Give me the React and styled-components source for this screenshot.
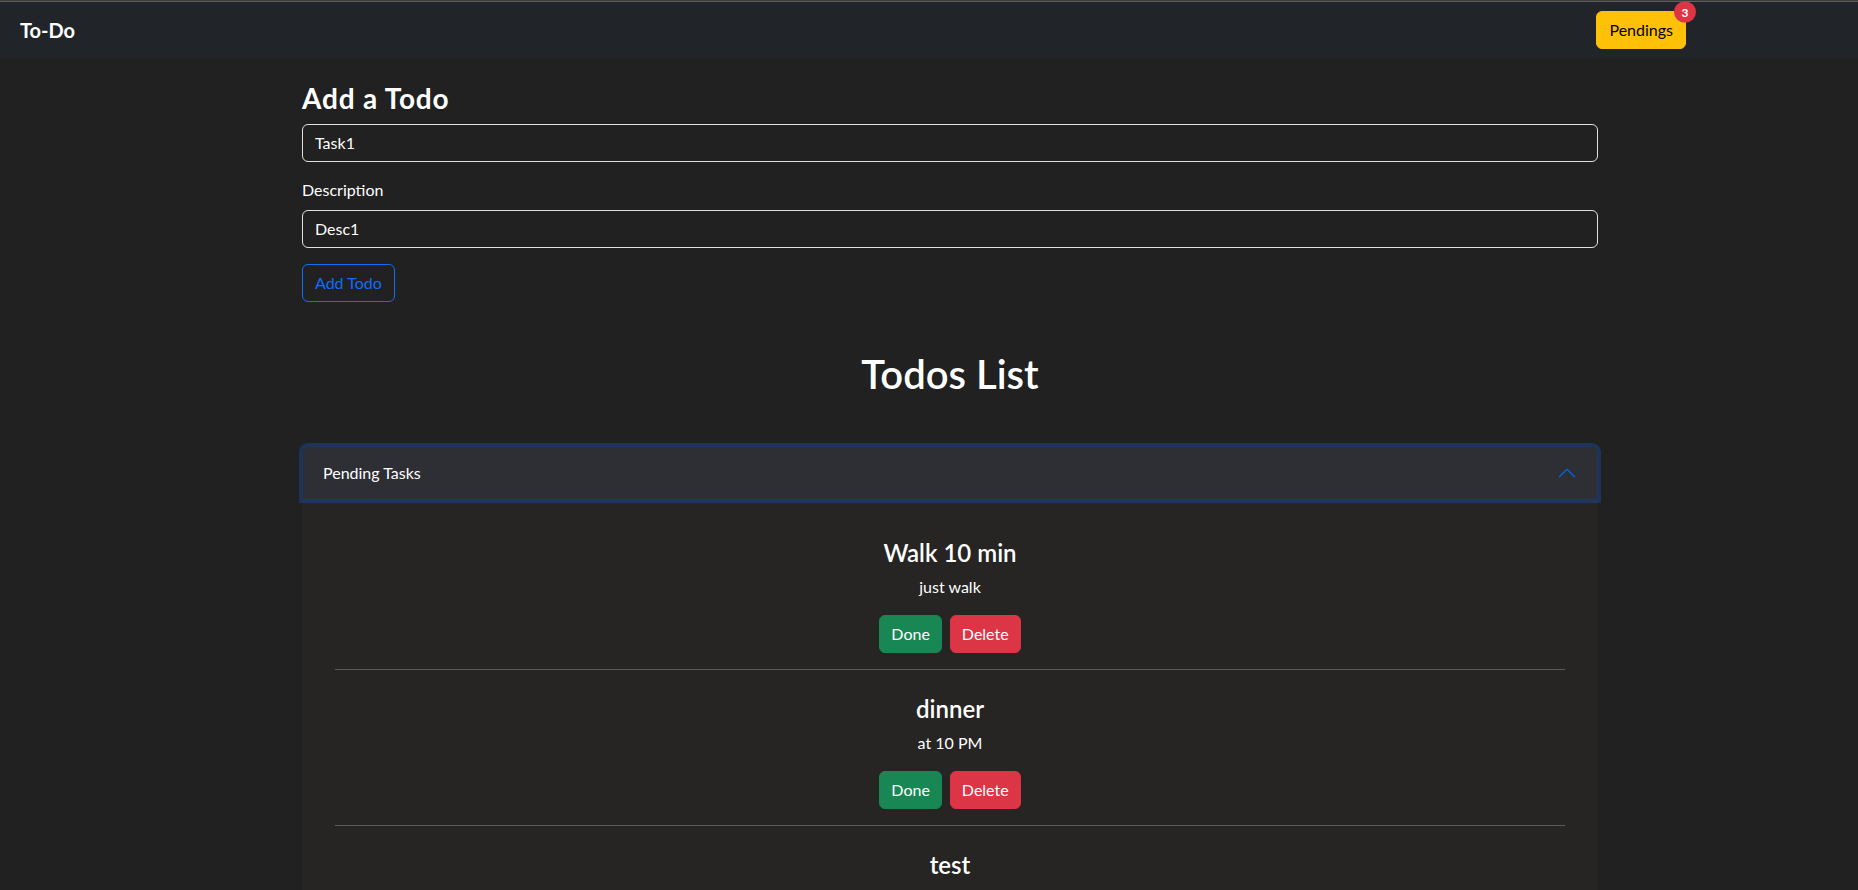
import React from "react";
import styled, { createGlobalStyle } from "styled-components";

const FONT = `Lato, "Noto Sans", "Liberation Sans", sans-serif`;

const Global = createGlobalStyle`
  html, body { margin: 0; padding: 0; background: #212121; }
  body { font-family: ${FONT}; color: #fff; }
  * { box-sizing: border-box; }
`;

const Viewport = styled.div`
  height: 100vh;
  overflow: hidden;
  background: #212121;
`;

const NavBar = styled.nav`
  height: 58px;
  display: flex;
  align-items: center;
  justify-content: space-between;
  padding: 2px 172px 0 20px;
  background: #212529;
  box-shadow: inset 0 1px 0 #3b3b3b, inset 0 2px 0 #5e5e5e;
`;

const Brand = styled.a`
  font-size: 20px;
  font-weight: 700;
  color: #fff;
  line-height: 30px;
  text-decoration: none;
`;

const PendingButton = styled.button`
  position: relative;
  height: 38px;
  padding: 6px 12px;
  border: 1px solid #ffc107;
  border-radius: 6px;
  background: #ffc107;
  color: #000;
  font-family: ${FONT};
  font-size: 16px;
  line-height: 24px;
  cursor: pointer;
`;

const Badge = styled.span`
  position: absolute;
  top: 0;
  left: 100%;
  transform: translate(-50%, -50%);
  min-width: 22px;
  height: 21px;
  padding: 0 7px;
  border-radius: 11px;
  background: #dc3545;
  color: #fff;
  font-size: 12px;
  font-weight: 700;
  line-height: 21px;
  text-align: center;
`;

const Main = styled.main`
  padding-left: 42px;
`;

const Container = styled.div`
  width: 1296px;
  margin: 24px auto 0;
`;

const FormTitle = styled.h3`
  margin: 0 0 8px;
  font-size: 28px;
  font-weight: 700;
  line-height: 1.2;
  letter-spacing: 0.8px;
`;

const TextInput = styled.input`
  display: block;
  width: 100%;
  height: 38px;
  padding: 6px 12px;
  border: 1px solid #dee2e6;
  border-radius: 6px;
  background: transparent;
  color: #fff;
  font-family: ${FONT};
  font-size: 16px;
  line-height: 24px;
  outline: none;
`;

const FieldLabel = styled.label`
  display: block;
  margin: 16px 0 8px;
  font-size: 16px;
  line-height: 24px;
`;

const OutlineButton = styled.button`
  margin-top: 16px;
  height: 38px;
  padding: 6px 12px;
  border: 1px solid #0d6efd;
  border-radius: 6px;
  background: transparent;
  color: #0d6efd;
  font-family: ${FONT};
  font-size: 16px;
  line-height: 24px;
  cursor: pointer;
`;

const ListTitle = styled.h1`
  margin: 48px 0;
  font-size: 40px;
  font-weight: 600;
  line-height: 48px;
  text-align: center;
`;

const Accordion = styled.section`
  border: 1px solid #232323;
  border-radius: 6px;
  background: #262524;
`;

const AccordionHeader = styled.button`
  position: relative;
  z-index: 1;
  width: 100%;
  height: 52px;
  display: flex;
  align-items: center;
  padding: 0 20px;
  border: 0;
  border-radius: 5px 5px 0 0;
  background: #2e2e35;
  color: #fff;
  font-family: ${FONT};
  font-size: 16px;
  text-align: left;
  box-shadow: 0 0 0 4px rgba(13, 110, 253, 0.25);
  cursor: pointer;
`;

const ChevronIcon = styled.svg`
  width: 20px;
  height: 20px;
  margin-left: auto;
  transform: rotate(-180deg);
`;

const AccordionBody = styled.div`
  padding-top: 15px;
`;

const TodoItem = styled.article`
  margin: 0 32px;
  padding: 24px 0 16px;
  border-bottom: 1px solid rgba(255, 255, 255, 0.25);
  text-align: center;
`;

const TodoTitle = styled.h4`
  margin: 0 0 8px;
  font-size: 24px;
  font-weight: 600;
  line-height: 29px;
`;

const TodoDesc = styled.p`
  margin: 0 0 16px;
  font-size: 16px;
  line-height: 24px;
`;

const Actions = styled.div`
  display: flex;
  justify-content: center;
  gap: 8px;
`;

const ActionButton = styled.button`
  height: 38px;
  padding: 6px 11px;
  border: 1px solid ${(p) => p.$bg};
  border-radius: 6px;
  background: ${(p) => p.$bg};
  color: #fff;
  font-family: ${FONT};
  font-size: 16px;
  line-height: 24px;
  cursor: pointer;
`;

const todos = [
  { title: "Walk 10 min", desc: "just walk" },
  { title: "dinner", desc: "at 10 PM" },
  { title: "test", desc: "test" },
];

export default function App() {
  return (
    <Viewport>
      <Global />
      <NavBar>
        <Brand href="#">To-Do</Brand>
        <PendingButton>
          Pendings
          <Badge>3</Badge>
        </PendingButton>
      </NavBar>
      <Main>
        <Container>
          <FormTitle>Add a Todo</FormTitle>
          <TextInput defaultValue="Task1" />
          <FieldLabel htmlFor="desc">Description</FieldLabel>
          <TextInput id="desc" defaultValue="Desc1" />
          <OutlineButton>Add Todo</OutlineButton>
          <ListTitle>Todos List</ListTitle>
          <Accordion>
            <AccordionHeader>
              Pending Tasks
              <ChevronIcon viewBox="0 0 16 16" fill="#0c63e4">
                <path
                  fillRule="evenodd"
                  d="M1.646 4.646a.5.5 0 0 1 .708 0L8 10.293l5.646-5.647a.5.5 0 0 1 .708.708l-6 6a.5.5 0 0 1-.708 0l-6-6a.5.5 0 0 1 0-.708z"
                />
              </ChevronIcon>
            </AccordionHeader>
            <AccordionBody>
              {todos.map((t, i) => (
                <TodoItem key={i}>
                  <TodoTitle>{t.title}</TodoTitle>
                  <TodoDesc>{t.desc}</TodoDesc>
                  <Actions>
                    <ActionButton $bg="#198754">Done</ActionButton>
                    <ActionButton $bg="#dc3545">Delete</ActionButton>
                  </Actions>
                </TodoItem>
              ))}
            </AccordionBody>
          </Accordion>
        </Container>
      </Main>
    </Viewport>
  );
}
